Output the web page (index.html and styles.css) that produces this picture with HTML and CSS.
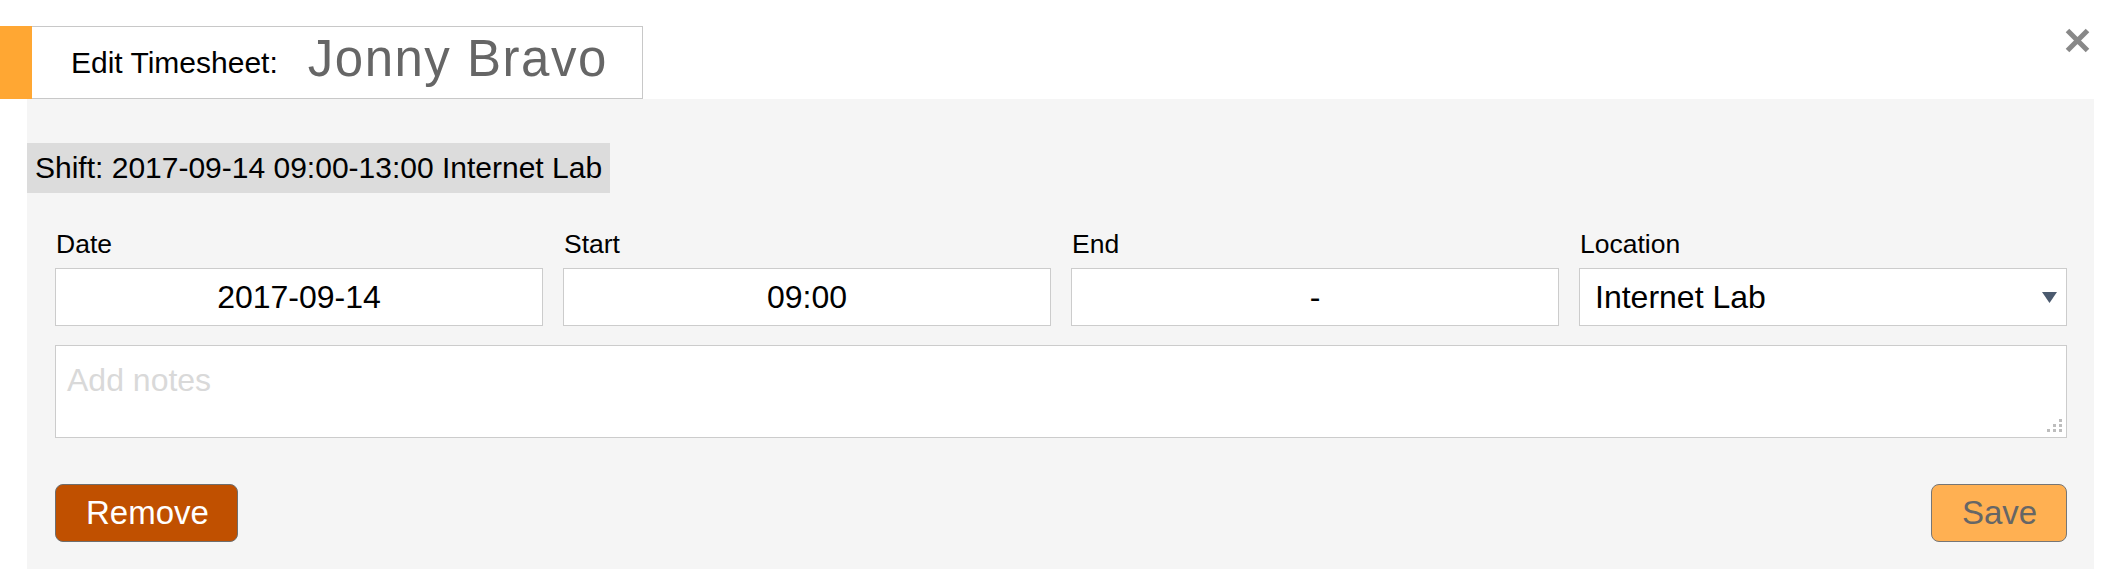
FILE: index.html
```html
<!DOCTYPE html>
<html lang="en">
<head>
<meta charset="utf-8">
<title>Edit Timesheet</title>
<link rel="stylesheet" href="styles.css">
</head>
<body>
<div class="modal">
  <div class="top">
    <div class="tab">
      <span class="accent"></span>
      <div class="title-box">
        <span class="title-label">Edit Timesheet:</span>
        <span class="title-name">Jonny Bravo</span>
      </div>
    </div>
    <button class="close" type="button" aria-label="Close">
      <svg width="25" height="25" viewBox="0 0 25 25"><path d="M2.5 2.5 L22.5 22.5 M22.5 2.5 L2.5 22.5" stroke="#888888" stroke-width="5" fill="none"/></svg>
    </button>
  </div>
  <div class="panel">
    <div class="shift">Shift: 2017-09-14 09:00-13:00 Internet Lab</div>
    <div class="fields">
      <div class="field">
        <label class="label">Date</label>
        <input class="input" type="text" value="2017-09-14">
      </div>
      <div class="field">
        <label class="label">Start</label>
        <input class="input" type="text" value="09:00">
      </div>
      <div class="field">
        <label class="label">End</label>
        <input class="input" type="text" value="-">
      </div>
      <div class="field">
        <label class="label">Location</label>
        <div class="select">
          <span>Internet Lab</span>
          <svg class="caret" width="15" height="11" viewBox="0 0 15 11"><polygon points="0,0 15,0 7.5,11" fill="#4b5a6e"/></svg>
        </div>
      </div>
    </div>
    <div class="notes">
      <textarea class="textarea" placeholder="Add notes"></textarea>
      <svg class="grip" width="15" height="14" viewBox="0 0 15 14">
        <rect x="12" y="0" width="3" height="3" fill="#bdbdbd"/>
        <rect x="6" y="5" width="3" height="3" fill="#bdbdbd"/>
        <rect x="12" y="5" width="3" height="3" fill="#bdbdbd"/>
        <rect x="0" y="10" width="3" height="3" fill="#bdbdbd"/>
        <rect x="6" y="10" width="3" height="3" fill="#bdbdbd"/>
        <rect x="12" y="10" width="3" height="3" fill="#bdbdbd"/>
      </svg>
    </div>
    <div class="actions">
      <button class="btn btn-remove" type="button">Remove</button>
      <button class="btn btn-save" type="button">Save</button>
    </div>
  </div>
</div>
</body>
</html>
```

FILE: styles.css
```css
* {
  box-sizing: border-box;
}

html, body {
  margin: 0;
  padding: 0;
  background: #ffffff;
}

body {
  font-family: "Liberation Sans", Arial, sans-serif;
  color: #000000;
}

.modal {
  width: 2111px;
}

.top {
  display: flex;
  justify-content: space-between;
  align-items: flex-start;
}

.tab {
  display: flex;
  margin-top: 26px;
  height: 73px;
}

.accent {
  width: 32px;
  background: #ffa733;
}

.title-box {
  display: flex;
  align-items: center;
  gap: 30px;
  padding: 0 34px 0 39px;
  border: 1px solid #c8c8c8;
  border-left: none;
  background: #ffffff;
  white-space: nowrap;
}

.title-label {
  font-size: 30px;
  flex-shrink: 0;
}

.title-name {
  font-size: 51px;
  letter-spacing: 1.5px;
  color: #666666;
  margin-bottom: 8px;
  flex-shrink: 0;
}

.close {
  margin: 28px 21px 0 0;
  padding: 0;
  border: none;
  background: transparent;
  width: 25px;
  height: 25px;
  display: flex;
}

.panel {
  margin-left: 27px;
  width: 2067px;
  background: #f5f5f5;
  padding: 44px 27px 27px 28px;
}

.shift {
  margin-left: -28px;
  display: inline-block;
  background: #dcdcdc;
  font-size: 30px;
  line-height: 50px;
  padding: 0 8px;
}

.fields {
  display: grid;
  grid-template-columns: repeat(4, 1fr);
  column-gap: 20px;
  margin-top: 36px;
}

.field {
  display: flex;
  flex-direction: column;
}

.label {
  font-size: 26.5px;
  line-height: 30px;
  margin-bottom: 9px;
  padding-left: 1px;
}

.input {
  height: 58px;
  width: 100%;
  border: 1px solid #cccccc;
  background: #ffffff;
  font-family: "Liberation Sans", Arial, sans-serif;
  font-size: 32px;
  color: #000000;
  text-align: center;
  padding: 0;
  margin: 0;
  outline: none;
}

.select {
  height: 58px;
  border: 1px solid #cccccc;
  background: #ffffff;
  font-size: 32px;
  display: flex;
  align-items: center;
  justify-content: space-between;
  padding: 0 9px 0 15px;
}

.caret {
  display: block;
}

.notes {
  position: relative;
  margin-top: 19px;
}

.textarea {
  display: block;
  width: 100%;
  height: 93px;
  border: 1px solid #cccccc;
  background: #ffffff;
  font-family: "Liberation Sans", Arial, sans-serif;
  font-size: 32px;
  padding: 16px 11px;
  margin: 0;
  resize: none;
  outline: none;
}

.textarea::placeholder {
  color: #d9d9d9;
  opacity: 1;
}

.grip {
  position: absolute;
  right: 5px;
  bottom: 5px;
}

.actions {
  display: flex;
  justify-content: space-between;
  margin-top: 46px;
}

.btn {
  height: 58px;
  border-radius: 8px;
  font-family: "Liberation Sans", Arial, sans-serif;
  font-size: 33px;
  padding: 0 30px;
  margin: 0;
}

.btn-remove {
  width: 183px;
  background: #c05000;
  color: #ffffff;
  border: 1px solid #6e6e6e;
}

.btn-save {
  width: 136px;
  background: #ffb052;
  color: #666666;
  border: 1px solid #767676;
}
```
